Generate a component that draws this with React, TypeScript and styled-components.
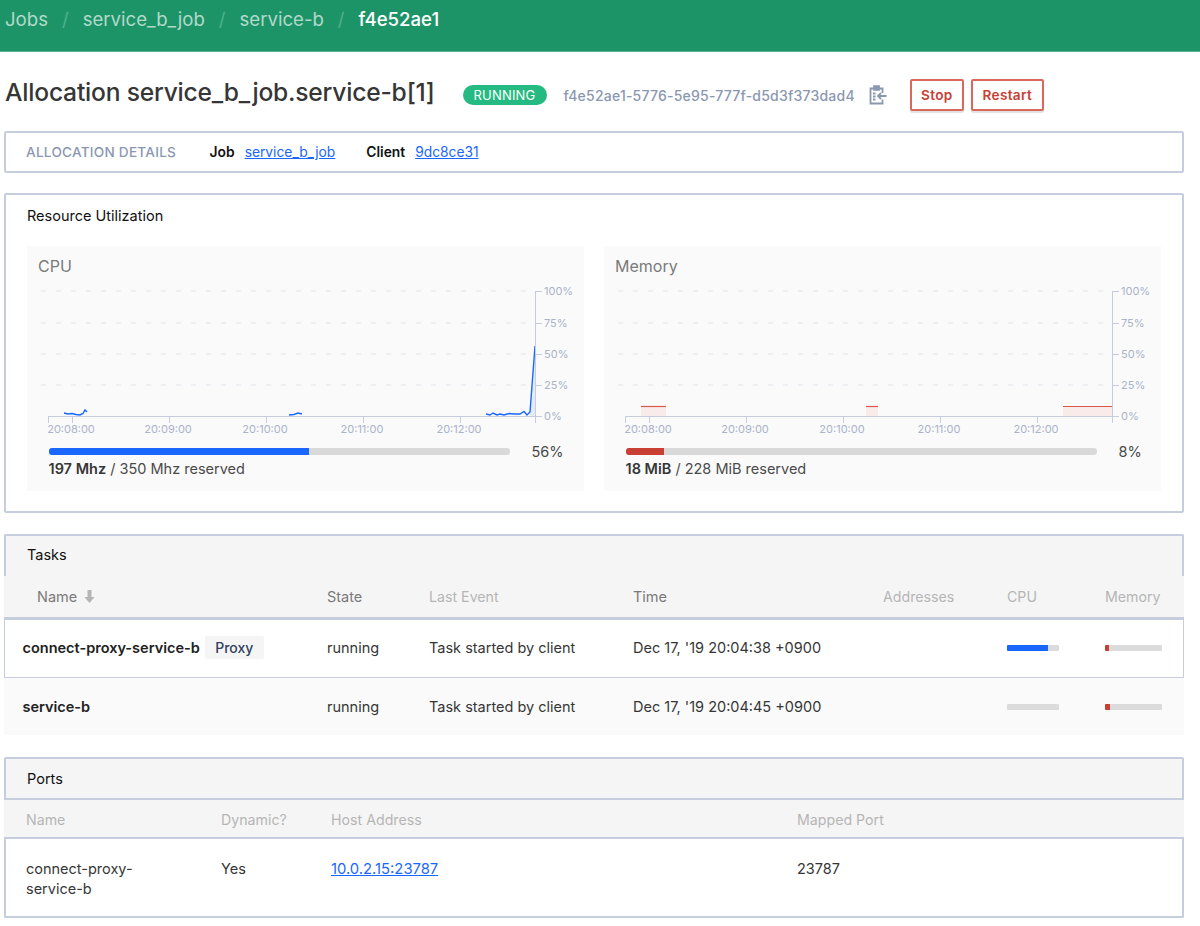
import styled, { createGlobalStyle } from "styled-components";

const GlobalStyle = createGlobalStyle`
  body {
    margin: 0;
    background: #ffffff;
    color: #363636;
    font-family: Inter, "Liberation Sans", sans-serif;
    font-size: 14.5px;
  }
`;

const BORDER = "#c6cedd";

const Header = styled.header`
  height: 52px;
  box-sizing: border-box;
  background: #1d9467;
  border-bottom: 1px solid #58b08f;
  display: flex;
  align-items: flex-start;
  padding: 8px 0 0 5px;
  gap: 14px;
  font-size: 18.6px;
  line-height: 23px;
`;

const Crumb = styled.span<{ $current?: boolean }>`
  color: ${(props) => (props.$current ? "#ffffff" : "rgba(255, 255, 255, 0.66)")};
  font-weight: ${(props) => (props.$current ? 500 : 400)};
`;

const Slash = styled.span`
  color: #4fb08d;
`;

const Page = styled.main`
  padding: 0 16px 0 4px;
`;

const TitleRow = styled.div`
  display: flex;
  align-items: center;
  height: 79px;
  box-sizing: border-box;
  padding: 7px 0 0 1px;
`;

const Title = styled.h1`
  margin: 0 28px 6px 0;
  font-size: 24.6px;
  font-weight: 500;
  color: #363636;
  letter-spacing: -0.2px;
  white-space: nowrap;
`;

const Badge = styled.span`
  background: #25ba81;
  color: #ffffff;
  border-radius: 10px;
  height: 20px;
  width: 84px;
  display: flex;
  align-items: center;
  justify-content: center;
  font-size: 13px;
  letter-spacing: 0.2px;
  margin-right: 17px;
`;

const AllocId = styled.span`
  color: #8a97b1;
  font-size: 14px;
  font-weight: 500;
  letter-spacing: 0.22px;
  margin-right: 14px;
  white-space: nowrap;
`;

const CopyIcon = styled.svg`
  width: 18px;
  height: 20px;
  margin-right: 23px;
`;

const Button = styled.button<{ $wide?: boolean }>`
  height: 32px;
  width: ${(props) => (props.$wide ? "73px" : "54px")};
  margin-right: 7px;
  padding: 0;
  background: #ffffff;
  border: 2px solid #d9675c;
  border-radius: 2px;
  box-shadow: 0 2px 1px rgba(10, 10, 10, 0.12);
  color: #c84034;
  font-family: inherit;
  font-size: 13.6px;
  font-weight: 600;
  letter-spacing: 0.3px;
`;

const DetailsBar = styled.section`
  height: 42px;
  box-sizing: border-box;
  border: 2px solid ${BORDER};
  border-radius: 2px;
  display: flex;
  align-items: center;
  padding-left: 20px;
  font-size: 13.8px;
`;

const DetailsLabel = styled.span`
  color: #8a97b1;
  font-weight: 500;
  font-size: 13.6px;
  letter-spacing: 0.25px;
  margin-right: 33.5px;
`;

const Term = styled.strong`
  color: #111111;
  font-weight: 600;
  margin-right: 10px;
`;

const Link = styled.a`
  color: #1967ff;
  text-decoration: underline;
  margin-right: 31px;
`;

const PortLink = styled(Link)`
  font-size: 14.8px;
`;

const Panel = styled.section`
  margin-top: 20px;
  height: 320px;
  box-sizing: border-box;
  border: 2px solid ${BORDER};
  border-radius: 2px;
`;

const PanelTitle = styled.div`
  padding: 12px 21px 0;
  height: 51px;
  box-sizing: border-box;
  line-height: 17px;
  color: #111111;
`;

const Charts = styled.div`
  display: grid;
  grid-template-columns: 557px 557px;
  column-gap: 20px;
  padding-left: 21px;
`;

const ChartCard = styled.div`
  height: 245px;
  background: #fafafa;
`;

const ChartTitle = styled.div`
  height: 37px;
  box-sizing: border-box;
  padding: 11px 0 0 11px;
  font-size: 16px;
  line-height: 19px;
  color: #7a7a7a;
`;

const ChartSvg = styled.svg`
  display: block;
  width: 557px;
  height: 155px;
  font-family: Inter, "Liberation Sans", sans-serif;
  font-size: 11px;
  fill: #a9b3c9;
`;

const Gauge = styled.div`
  display: flex;
  align-items: center;
  padding: 5px 0 0 22px;
  height: 22px;
  box-sizing: border-box;
`;

const GaugeTrack = styled.div<{ $width: number }>`
  width: ${(props) => props.$width}px;
  height: 7px;
  border-radius: 3px;
  background: #d9d9d9;
  overflow: hidden;
`;

const GaugeFill = styled.div<{ $color: string }>`
  height: 100%;
  background: ${(props) => props.$color};
`;

const GaugePercent = styled.span`
  margin-left: 21.5px;
  color: #4a4a4a;
`;

const GaugeText = styled.div`
  padding: 0 0 0 21.5px;
  line-height: 17px;
  color: #4a4a4a;
  strong {
    color: #363636;
    font-weight: 600;
  }
`;

const SectionHead = styled.div<{ $top: number; $closed?: boolean }>`
  margin-top: ${(props) => props.$top}px;
  height: ${(props) => (props.$closed ? 43 : 42)}px;
  box-sizing: border-box;
  background: #f5f5f5;
  border: 2px solid ${BORDER};
  border-bottom: ${(props) => (props.$closed ? `2px solid ${BORDER}` : "0")};
  border-radius: 2px 2px 0 0;
  padding: ${(props) => (props.$closed ? 11 : 10)}px 21px 0;
  line-height: 17px;
  color: #111111;
`;

const TaskGrid = styled.div`
  display: grid;
  grid-template-columns: 323px 102px 204px 250px 124px 98px 1fr;
  align-items: center;
`;

const TaskHead = styled(TaskGrid)`
  height: 43px;
  background: #f5f5f5;
  border-bottom: 2px solid ${BORDER};
  box-sizing: border-box;
`;

const HeadCell = styled.div<{ $active?: boolean; $indent?: number }>`
  display: flex;
  align-items: center;
  gap: 7px;
  padding-left: ${(props) => props.$indent ?? 0}px;
  color: ${(props) => (props.$active ? "#7a7a7a" : "#b5b5b5")};
  font-size: ${(props) => (props.$active ? "14.5px" : "14.2px")};
`;

const TaskRow = styled(TaskGrid)<{ $selected?: boolean }>`
  height: ${(props) => (props.$selected ? 59 : 57)}px;
  box-sizing: border-box;
  padding-bottom: ${(props) => (props.$selected ? 2 : 0)}px;
  background: ${(props) => (props.$selected ? "#ffffff" : "#fafafa")};
  box-shadow: ${(props) => (props.$selected ? `inset 0 0 0 1px ${BORDER}` : "none")};
`;

const TaskName = styled.div`
  padding-left: 18.5px;
  display: flex;
  align-items: center;
  gap: 5px;
  font-weight: 600;
  color: #222222;
`;

const Tag = styled.span`
  background: #f5f5f5;
  color: #2f4160;
  font-weight: 500;
  font-size: 14px;
  width: 59px;
  height: 23px;
  display: flex;
  align-items: center;
  justify-content: center;
  border-radius: 2px;
`;

const Cell = styled.div`
  color: #363636;
  white-space: nowrap;
`;

const MiniBar = styled.div<{ $width: number }>`
  width: ${(props) => props.$width}px;
  height: 6px;
  background: #dbdbdb;
  border-radius: 1px;
  overflow: hidden;
`;

const PortHead = styled.div`
  display: grid;
  grid-template-columns: 217px 110px 466px 1fr;
  height: 39px;
  box-sizing: border-box;
  padding-top: 1px;
  background: #f5f5f5;
  border-bottom: 2px solid ${BORDER};
  align-items: center;
`;

const PortRow = styled.div`
  display: grid;
  grid-template-columns: 215px 110px 466px 1fr;
  height: 79px;
  box-sizing: border-box;
  border: 2px solid ${BORDER};
  border-top: 0;
  border-radius: 0 0 2px 2px;
  padding-top: 20px;
  line-height: 20px;
  color: #363636;
`;

const PortName = styled.div`
  padding: 0 55px 0 20px;
`;

const GRID_Y = [8, 40, 71, 102];
const Y_LABELS: [string, number][] = [
  ["100%", 8],
  ["75%", 40],
  ["50%", 71],
  ["25%", 102],
  ["0%", 133],
];
const X_TICKS: [string, number][] = [
  ["20:08:00", 45],
  ["20:09:00", 142],
  ["20:10:00", 239],
  ["20:11:00", 336],
  ["20:12:00", 433],
];

const CPU_LINES = [
  "37,130 41,131 45,130.5 49,131.5 53,132 56,130.5 58,127 60,129",
  "262,132 267,131.5 271,130 275,131",
  "459,131 463,132 466,130 470,132 473,131 477,132 482,130.5 487,131 493,131 497,128.5 500,132 503,129 508,63",
];
const MEMORY_SPANS: [number, number][] = [
  [37, 62],
  [262, 274],
  [459, 508],
];

const ChartFrame = ({ children }: { children: React.ReactNode }) => (
  <ChartSvg viewBox="0 0 557 155">
    {GRID_Y.map((y) => (
      <line key={y} x1="14" x2="508" y1={y} y2={y} stroke="#dfe3ec" strokeDasharray="5 10" />
    ))}
    {children}
    <line x1="21" x2="508" y1="133.5" y2="133.5" stroke={BORDER} />
    <line x1="508.5" x2="508.5" y1="8" y2="140" stroke={BORDER} />
    <line x1="21.5" x2="21.5" y1="133" y2="140" stroke={BORDER} />
    {X_TICKS.map(([label, x]) => (
      <g key={label}>
        <line x1={x + 0.5} x2={x + 0.5} y1="133" y2="140" stroke={BORDER} />
        <text x={x - 1} y="150" textAnchor="middle">
          {label}
        </text>
      </g>
    ))}
    {Y_LABELS.map(([label, y]) => (
      <g key={label}>
        <line x1="508" x2="515" y1={y + 0.5} y2={y + 0.5} stroke={BORDER} />
        <text x="517" y={y + 4}>
          {label}
        </text>
      </g>
    ))}
  </ChartSvg>
);

const SortArrow = () => (
  <svg width="11" height="13" viewBox="0 0 11 13">
    <path d="M3.5 0h4v7h3L5.5 13 .5 7h3z" fill="#b5b5b5" />
  </svg>
);

const MiniGauge = ({ width, percent, color }: { width: number; percent: number; color: string }) => (
  <MiniBar $width={width}>
    <GaugeFill $color={color} style={{ width: `${percent}%` }} />
  </MiniBar>
);

const App = () => {
  return (
    <>
      <GlobalStyle />
      <Header>
        <Crumb>Jobs</Crumb>
        <Slash>/</Slash>
        <Crumb>service_b_job</Crumb>
        <Slash>/</Slash>
        <Crumb>service-b</Crumb>
        <Slash>/</Slash>
        <Crumb $current>f4e52ae1</Crumb>
      </Header>
      <Page>
        <TitleRow>
          <Title>Allocation service_b_job.service-b[1]</Title>
          <Badge>RUNNING</Badge>
          <AllocId>f4e52ae1-5776-5e95-777f-d5d3f373dad4</AllocId>
          <CopyIcon viewBox="0 0 18 20" fill="none" stroke="#8a97b1" strokeWidth="1.8">
            <path d="M4.5 3.5H1.5v15h12v-4M13.5 8V3.5h-3" />
            <path d="M5 1.2h5v3.6H5z" fill="#8a97b1" />
            <path d="M4 8.5h2.5M4 11.5h2.5M4 14.5h2.5" />
            <path d="M17.5 11H9M12 8l-3 3 3 3" />
          </CopyIcon>
          <Button>Stop</Button>
          <Button $wide>Restart</Button>
        </TitleRow>
        <DetailsBar>
          <DetailsLabel>ALLOCATION DETAILS</DetailsLabel>
          <Term>Job</Term>
          <Link href="#">service_b_job</Link>
          <Term>Client</Term>
          <Link href="#">9dc8ce31</Link>
        </DetailsBar>
        <Panel>
          <PanelTitle>Resource Utilization</PanelTitle>
          <Charts>
            <ChartCard>
              <ChartTitle>CPU</ChartTitle>
              <ChartFrame>
                <path d="M503 133V129L508 63V133Z" fill="rgba(25, 103, 255, 0.1)" />
                {CPU_LINES.map((points) => (
                  <polyline key={points} points={points} fill="none" stroke="#1967ff" strokeWidth="1.4" />
                ))}
              </ChartFrame>
              <Gauge>
                <GaugeTrack $width={461}>
                  <GaugeFill $color="#1967ff" style={{ width: "56.4%" }} />
                </GaugeTrack>
                <GaugePercent>56%</GaugePercent>
              </Gauge>
              <GaugeText>
                <strong>197 Mhz</strong> / 350 Mhz reserved
              </GaugeText>
            </ChartCard>
            <ChartCard>
              <ChartTitle>Memory</ChartTitle>
              <ChartFrame>
                {MEMORY_SPANS.map(([from, to]) => (
                  <g key={from}>
                    <rect x={from} y="123.5" width={to - from} height="9.5" fill="#f8ebea" />
                    <line x1={from} x2={to} y1="123.5" y2="123.5" stroke="#d9574b" strokeWidth="1.2" />
                  </g>
                ))}
              </ChartFrame>
              <Gauge>
                <GaugeTrack $width={471}>
                  <GaugeFill $color="#c84034" style={{ width: "8%" }} />
                </GaugeTrack>
                <GaugePercent>8%</GaugePercent>
              </Gauge>
              <GaugeText>
                <strong>18 MiB</strong> / 228 MiB reserved
              </GaugeText>
            </ChartCard>
          </Charts>
        </Panel>
        <SectionHead $top={21}>Tasks</SectionHead>
        <TaskHead>
          <HeadCell $active $indent={33}>
            Name <SortArrow />
          </HeadCell>
          <HeadCell $active>State</HeadCell>
          <HeadCell>Last Event</HeadCell>
          <HeadCell $active>Time</HeadCell>
          <HeadCell>Addresses</HeadCell>
          <HeadCell>CPU</HeadCell>
          <HeadCell>Memory</HeadCell>
        </TaskHead>
        <TaskRow $selected>
          <TaskName>
            connect-proxy-service-b <Tag>Proxy</Tag>
          </TaskName>
          <Cell>running</Cell>
          <Cell>Task started by client</Cell>
          <Cell>Dec 17, '19 20:04:38 +0900</Cell>
          <Cell />
          <MiniGauge width={52} percent={79} color="#1967ff" />
          <MiniGauge width={57} percent={7} color="#c84034" />
        </TaskRow>
        <TaskRow>
          <TaskName>service-b</TaskName>
          <Cell>running</Cell>
          <Cell>Task started by client</Cell>
          <Cell>Dec 17, '19 20:04:45 +0900</Cell>
          <Cell />
          <MiniGauge width={52} percent={0} color="#1967ff" />
          <MiniGauge width={57} percent={9} color="#c84034" />
        </TaskRow>
        <SectionHead $top={22} $closed>
          Ports
        </SectionHead>
        <PortHead>
          <HeadCell $indent={22}>Name</HeadCell>
          <HeadCell>Dynamic?</HeadCell>
          <HeadCell>Host Address</HeadCell>
          <HeadCell>Mapped Port</HeadCell>
        </PortHead>
        <PortRow>
          <PortName>connect-proxy-service-b</PortName>
          <div>Yes</div>
          <div>
            <PortLink href="#">10.0.2.15:23787</PortLink>
          </div>
          <div>23787</div>
        </PortRow>
      </Page>
    </>
  );
};

export default App;
